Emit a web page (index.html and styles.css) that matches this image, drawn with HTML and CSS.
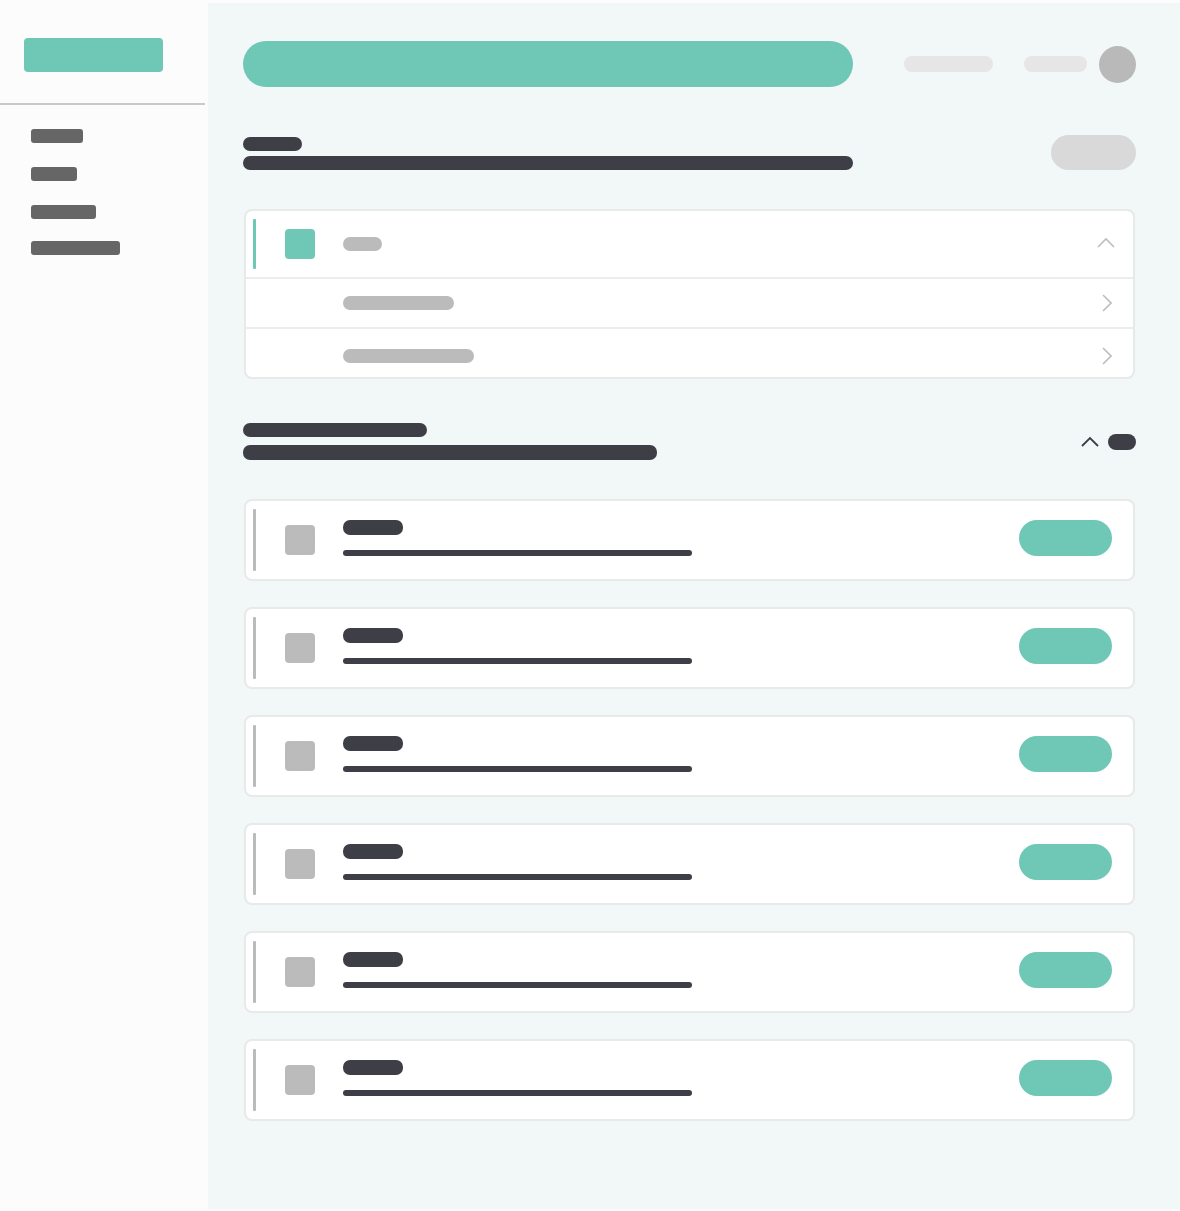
FILE: index.html
```html
<!DOCTYPE html>
<html lang="en">
<head>
<meta charset="utf-8">
<title>Dashboard</title>
<link rel="stylesheet" href="styles.css">
</head>
<body>
<div class="app">
  <aside class="sidebar">
    <div class="logo"></div>
    <div class="divider"></div>
    <nav class="nav">
      <div class="nav-item w1"></div>
      <div class="nav-item w2"></div>
      <div class="nav-item w3"></div>
      <div class="nav-item w4"></div>
    </nav>
  </aside>
  <main class="main">
    <header class="topbar">
      <div class="search"></div>
      <div class="top-right">
        <div class="top-link l1"></div>
        <div class="top-link l2"></div>
        <div class="avatar"></div>
      </div>
    </header>

    <section class="page-head">
      <div class="titles">
        <div class="bar dark t-small"></div>
        <div class="bar dark t-long"></div>
      </div>
      <div class="ghost-btn"></div>
    </section>

    <div class="accordion">
      <div class="acc-row acc-head">
        <div class="accent teal"></div>
        <div class="sq teal-bg"></div>
        <div class="pill grey p1"></div>
        <svg class="chev-up" width="18" height="11" viewBox="0 0 18 11"><polyline points="1,10 9,2 17,10" fill="none" stroke="#bdbdbd" stroke-width="1.6"/></svg>
      </div>
      <div class="acc-row acc-sub">
        <div class="pill grey p2"></div>
        <svg class="chev-right" width="11" height="18" viewBox="0 0 11 18"><polyline points="2,1 10,9 2,17" fill="none" stroke="#bdbdbd" stroke-width="1.6"/></svg>
      </div>
      <div class="acc-row acc-sub last">
        <div class="pill grey p3"></div>
        <svg class="chev-right" width="11" height="18" viewBox="0 0 11 18"><polyline points="2,1 10,9 2,17" fill="none" stroke="#bdbdbd" stroke-width="1.6"/></svg>
      </div>
    </div>

    <section class="section-head">
      <div class="titles">
        <div class="bar dark s-a"></div>
        <div class="bar dark s-b"></div>
      </div>
      <div class="sec-controls">
        <svg width="18" height="11" viewBox="0 0 18 11"><polyline points="1,10 9,2 17,10" fill="none" stroke="#3d3e46" stroke-width="1.8"/></svg>
        <div class="toggle"></div>
      </div>
    </section>

    <div class="list">
      <div class="card"><div class="accent grey-bg"></div><div class="sq grey-bg"></div><div class="card-text"><div class="c-title"></div><div class="c-sub"></div></div><div class="action"></div></div>
      <div class="card"><div class="accent grey-bg"></div><div class="sq grey-bg"></div><div class="card-text"><div class="c-title"></div><div class="c-sub"></div></div><div class="action"></div></div>
      <div class="card"><div class="accent grey-bg"></div><div class="sq grey-bg"></div><div class="card-text"><div class="c-title"></div><div class="c-sub"></div></div><div class="action"></div></div>
      <div class="card"><div class="accent grey-bg"></div><div class="sq grey-bg"></div><div class="card-text"><div class="c-title"></div><div class="c-sub"></div></div><div class="action"></div></div>
      <div class="card"><div class="accent grey-bg"></div><div class="sq grey-bg"></div><div class="card-text"><div class="c-title"></div><div class="c-sub"></div></div><div class="action"></div></div>
      <div class="card"><div class="accent grey-bg"></div><div class="sq grey-bg"></div><div class="card-text"><div class="c-title"></div><div class="c-sub"></div></div><div class="action"></div></div>
    </div>
  </main>
</div>
</body>
</html>
```

FILE: styles.css
```css
* { box-sizing: border-box; }
html, body { margin: 0; padding: 0; }
body {
  background: #fcfcfc;
  font-family: "Liberation Sans", Arial, sans-serif;
}
.app {
  display: flex;
  width: 1180px;
  height: 1211px;
}
.sidebar {
  width: 205px;
  flex: 0 0 205px;
  background: #fcfcfc;
  padding-top: 38px;
}
.logo {
  margin-left: 24px;
  width: 139px;
  height: 34px;
  border-radius: 4px;
  background: #6fc8b5;
}
.divider {
  margin-top: 31px;
  height: 2px;
  background: #c9c9c9;
}
.nav {
  display: flex;
  flex-direction: column;
  padding-left: 31px;
  padding-top: 24px;
}
.nav-item {
  height: 14px;
  border-radius: 3px;
  background: #666666;
}
.nav-item.w1 { width: 52px; }
.nav-item.w2 { width: 46px; margin-top: 24px; }
.nav-item.w3 { width: 65px; margin-top: 24px; }
.nav-item.w4 { width: 89px; margin-top: 22px; }

.main {
  flex: 1;
  margin: 3px 0 2px 3px;
  background: #f2f7f7;
  padding: 38px 44px 0 35px;
}
.topbar {
  display: flex;
  align-items: center;
  height: 46px;
}
.search {
  width: 610px;
  height: 46px;
  border-radius: 23px;
  background: #6fc8b5;
}
.top-right {
  display: flex;
  align-items: center;
  margin-left: 51px;
}
.top-link {
  height: 16px;
  border-radius: 8px;
  background: #e6e6e6;
}
.top-link.l1 { width: 89px; }
.top-link.l2 { width: 63px; margin-left: 31px; }
.avatar {
  width: 37px;
  height: 37px;
  border-radius: 50%;
  background: #b9b9b9;
  margin-left: 12px;
}

.page-head {
  margin-top: 48px;
  display: flex;
  align-items: flex-end;
  justify-content: space-between;
}
.titles {
  display: flex;
  flex-direction: column;
}
.bar {
  height: 14px;
  border-radius: 7px;
}
.dark { background: #3d3e46; }
.t-small { width: 59px; }
.t-long { width: 610px; margin-top: 5px; }
.ghost-btn {
  width: 85px;
  height: 35px;
  border-radius: 18px;
  background: #d9d9d9;
}

.accordion {
  margin: 39px 1px 0 1px;
  background: #ffffff;
  border: 2px solid #e8e9e9;
  border-radius: 8px;
}
.acc-row {
  display: flex;
  align-items: center;
  border-bottom: 2px solid #ececec;
  padding-right: 18px;
}
.acc-row.last { border-bottom: 0; }
.acc-head {
  height: 68px;
  padding-left: 7px;
}
.acc-sub {
  height: 50px;
  padding-left: 97px;
  padding-right: 21px;
}
.acc-sub.last {
  height: 48px;
  padding-top: 6px;
}
.accent {
  width: 3px;
  height: 50px;
  border-radius: 1px;
}
.teal { background: #6fc8b5; }
.teal-bg { background: #6fc8b5; }
.grey-bg { background: #bbbbbb; }
.sq {
  width: 30px;
  height: 30px;
  border-radius: 4px;
  margin-left: 29px;
}
.pill {
  height: 14px;
  border-radius: 7px;
}
.grey { background: #bbbbbb; }
.p1 { width: 39px; margin-left: 28px; }
.p2 { width: 111px; }
.p3 { width: 131px; }
.chev-up, .chev-right { margin-left: auto; display: block; }
.chev-up { margin-top: -4px; }

.section-head {
  margin-top: 44px;
  display: flex;
  align-items: center;
  justify-content: space-between;
}
.s-a { width: 184px; }
.s-b { width: 414px; height: 15px; margin-top: 8px; }
.sec-controls {
  display: flex;
  align-items: center;
  gap: 9px;
}
.sec-controls svg { display: block; margin-top: -1px; }
.toggle {
  width: 28px;
  height: 16px;
  border-radius: 8px;
  background: #3d3e46;
}

.list {
  margin: 39px 1px 0 1px;
  display: flex;
  flex-direction: column;
  gap: 26px;
}
.card {
  height: 82px;
  display: flex;
  align-items: center;
  background: #ffffff;
  border: 2px solid #e8e9e9;
  border-radius: 8px;
  padding-left: 7px;
  padding-right: 21px;
}
.card .accent { height: 62px; }
.card-text {
  display: flex;
  flex-direction: column;
  margin-left: 28px;
  margin-top: -4px;
}
.c-title {
  width: 60px;
  height: 15px;
  border-radius: 7px;
  background: #3d3e46;
}
.c-sub {
  width: 349px;
  height: 6px;
  border-radius: 3px;
  background: #3d3e46;
  margin-top: 15px;
}
.action {
  margin-left: auto;
  margin-top: -4px;
  width: 93px;
  height: 36px;
  border-radius: 18px;
  background: #6fc8b5;
}
```
